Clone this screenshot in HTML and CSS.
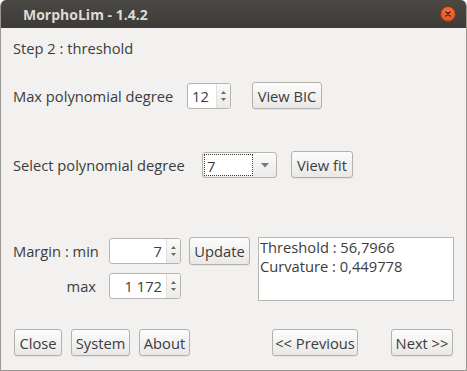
FILE: index.html
```html
<!DOCTYPE html>
<html lang="en">

<head>
    <meta charset="UTF-8">
    <title>MorphoLim - 1.4.2</title>
    <link rel="stylesheet" href="styles.css">
</head>

<body>
    <div class="window">
        <div class="titlebar">
            <span class="title">MorphoLim - 1.4.2</span>
            <span class="close-btn">
                <svg width="10" height="10" viewBox="0 0 10 10">
                    <path d="M3 3 L7 7 M7 3 L3 7" stroke="#3a1a0c" stroke-width="1.4" stroke-linecap="round"/>
                </svg>
            </span>
        </div>
        <div class="content">
            <div class="step">Step 2 : threshold</div>

            <div class="row row-max">
                <span class="label label-first">Max polynomial degree</span>
                <div class="spin spin-small">
                    <span class="spin-value left">12</span>
                    <span class="spin-arrows">
                        <svg width="7" height="14" viewBox="0 0 7 14">
                            <path d="M1 5 L3.5 2 L6 5 Z" fill="#6a6864"/>
                            <path d="M1 9 L3.5 12 L6 9 Z" fill="#6a6864"/>
                        </svg>
                    </span>
                </div>
                <button class="btn btn-bic">View BIC</button>
            </div>

            <div class="row row-select">
                <span class="label label-second">Select polynomial degree</span>
                <div class="combo">
                    <span class="combo-value">7</span>
                    <span class="combo-arrow">
                        <svg width="8" height="6" viewBox="0 0 8 6">
                            <path d="M0 1 L8 1 L4 5.5 Z" fill="#7a7874"/>
                        </svg>
                    </span>
                </div>
                <button class="btn btn-fit">View fit</button>
            </div>

            <div class="margin-block">
                <div class="margin-left">
                    <div class="row row-min">
                        <span class="label label-min">Margin : min</span>
                        <div class="spin spin-wide">
                            <span class="spin-value">7</span>
                            <span class="spin-arrows">
                                <svg width="7" height="14" viewBox="0 0 7 14">
                                    <path d="M1 5 L3.5 2 L6 5 Z" fill="#6a6864"/>
                                    <path d="M1 9 L3.5 12 L6 9 Z" fill="#6a6864"/>
                                </svg>
                            </span>
                        </div>
                        <button class="btn btn-update">Update</button>
                    </div>
                    <div class="row row-maxm">
                        <span class="label label-max">max</span>
                        <div class="spin spin-wide">
                            <span class="spin-value">1 172</span>
                            <span class="spin-arrows">
                                <svg width="7" height="14" viewBox="0 0 7 14">
                                    <path d="M1 5 L3.5 2 L6 5 Z" fill="#6a6864"/>
                                    <path d="M1 9 L3.5 12 L6 9 Z" fill="#6a6864"/>
                                </svg>
                            </span>
                        </div>
                    </div>
                </div>
                <div class="result">
                    <div>Threshold : 56,7966</div>
                    <div>Curvature : 0,449778</div>
                </div>
            </div>

            <div class="footer">
                <div class="footer-left">
                    <button class="btn btn-close">Close</button>
                    <button class="btn btn-system">System</button>
                    <button class="btn btn-about">About</button>
                </div>
                <div class="footer-right">
                    <button class="btn btn-prev">&lt;&lt; Previous</button>
                    <button class="btn btn-next">Next &gt;&gt;</button>
                </div>
            </div>
        </div>
    </div>
</body>

</html>
```

FILE: styles.css
```css
/* ---- base ---- */

* {
    box-sizing: border-box;
}

body {
    margin: 0;
    background: #ffffff;
    font-family: "Open Sans", "DejaVu Sans", sans-serif;
    font-size: 14.7px;
    color: #3c3c3c;
}

/* ---- window frame ---- */

.window {
    width: 467px;
    height: 371px;
    background: #f2f1f0;
    border: 1px solid #9a9893;
    border-top: none;
    border-radius: 6px 6px 0 0;
    overflow: hidden;
    display: flex;
    flex-direction: column;
}

.titlebar {
    height: 28px;
    background: linear-gradient(#4a4944, #3c3b37);
    display: flex;
    align-items: center;
    justify-content: space-between;
    padding: 0 10px 0 22px;
    flex-shrink: 0;
}

.title {
    color: #dfdbd2;
    font-weight: bold;
    font-size: 14px;
}

.close-btn {
    width: 16px;
    height: 16px;
    border-radius: 50%;
    background: radial-gradient(circle at 50% 35%, #f07746, #df4a16);
    border: 1px solid #8f3511;
    display: flex;
    align-items: center;
    justify-content: center;
}

.content {
    flex: 1;
    padding: 0 12px 0 12px;
    display: flex;
    flex-direction: column;
}

.step {
    margin-top: 11px;
    height: 18px;
    line-height: 18px;
}

/* ---- rows ---- */

.row {
    display: flex;
    align-items: center;
}

.row-max {
    margin-top: 25px;
}

.row-select {
    margin-top: 42px;
}

.label {
    white-space: nowrap;
}

.label-first {
    width: 174px;
}

.label-second {
    width: 189px;
}

/* ---- buttons ---- */

.btn {
    font-family: inherit;
    font-size: 14.7px;
    color: #3c3c3c;
    height: 27px;
    padding: 0 2px;
    background: linear-gradient(#fcfcfc, #e9e8e7);
    border: 1px solid #b4b0aa;
    border-radius: 3px;
    box-shadow: 0 1px 1px rgba(0, 0, 0, 0.06);
}

.btn-bic {
    margin-left: 21px;
    width: 70px;
}

.btn-fit {
    margin-left: 14px;
    width: 62px;
}

.btn-update {
    margin-left: 8px;
    width: 61px;
    height: 28px;
}

/* ---- spin boxes ---- */

.spin {
    display: flex;
    height: 26px;
    background: #ffffff;
    border: 1px solid #b8b4ae;
    border-radius: 3px;
    overflow: hidden;
}

.spin-small {
    width: 44px;
}

.spin-wide {
    width: 72px;
}

.spin-value {
    flex: 1;
    text-align: right;
    padding-right: 4px;
    line-height: 24px;
}

.spin-value.left {
    text-align: left;
    padding-left: 4px;
}

.spin-arrows {
    width: 14px;
    background: linear-gradient(#fafafa, #ebeae9);
    border-left: 1px solid #e2e0dd;
    display: flex;
    align-items: center;
    justify-content: center;
}

/* ---- combo ---- */

.combo {
    width: 75px;
    height: 26px;
    display: flex;
    border: 1px solid #b8b4ae;
    border-radius: 3px;
    background: linear-gradient(#fafafa, #ebeae9);
    overflow: hidden;
}

.combo-value {
    width: 49px;
    background: #ffffff;
    border: 1px dotted #3c3c3c;
    padding-left: 2px;
    line-height: 22px;
    margin: 1px 0 1px 1px;
}

.combo-arrow {
    flex: 1;
    display: flex;
    align-items: center;
    justify-content: center;
}

/* ---- margin block ---- */

.margin-block {
    margin-top: 59px;
    display: flex;
}

.margin-left {
    display: flex;
    flex-direction: column;
}

.label-min {
    width: 96px;
}

.label-max {
    width: 96px;
    text-align: right;
    padding-right: 13px;
}

.row-maxm {
    margin-top: 8px;
}

.result {
    margin-left: 8px;
    width: 197px;
    height: 64px;
    background: #ffffff;
    border: 1px solid #b8b4ae;
    padding: 0 1px;
    line-height: 19px;
}

/* ---- footer ---- */

.footer {
    margin-top: 28px;
    display: flex;
    justify-content: space-between;
}

.footer .btn {
    height: 27px;
}

.footer-left {
    display: flex;
    gap: 9px;
    margin-left: 1px;
}

.footer-right {
    display: flex;
    gap: 33px;
    margin-right: 1px;
}

.btn-close {
    width: 48px;
}

.btn-system {
    width: 59px;
}

.btn-about {
    width: 51px;
}

.btn-prev {
    width: 86px;
}

.btn-next {
    width: 62px;
}
```
